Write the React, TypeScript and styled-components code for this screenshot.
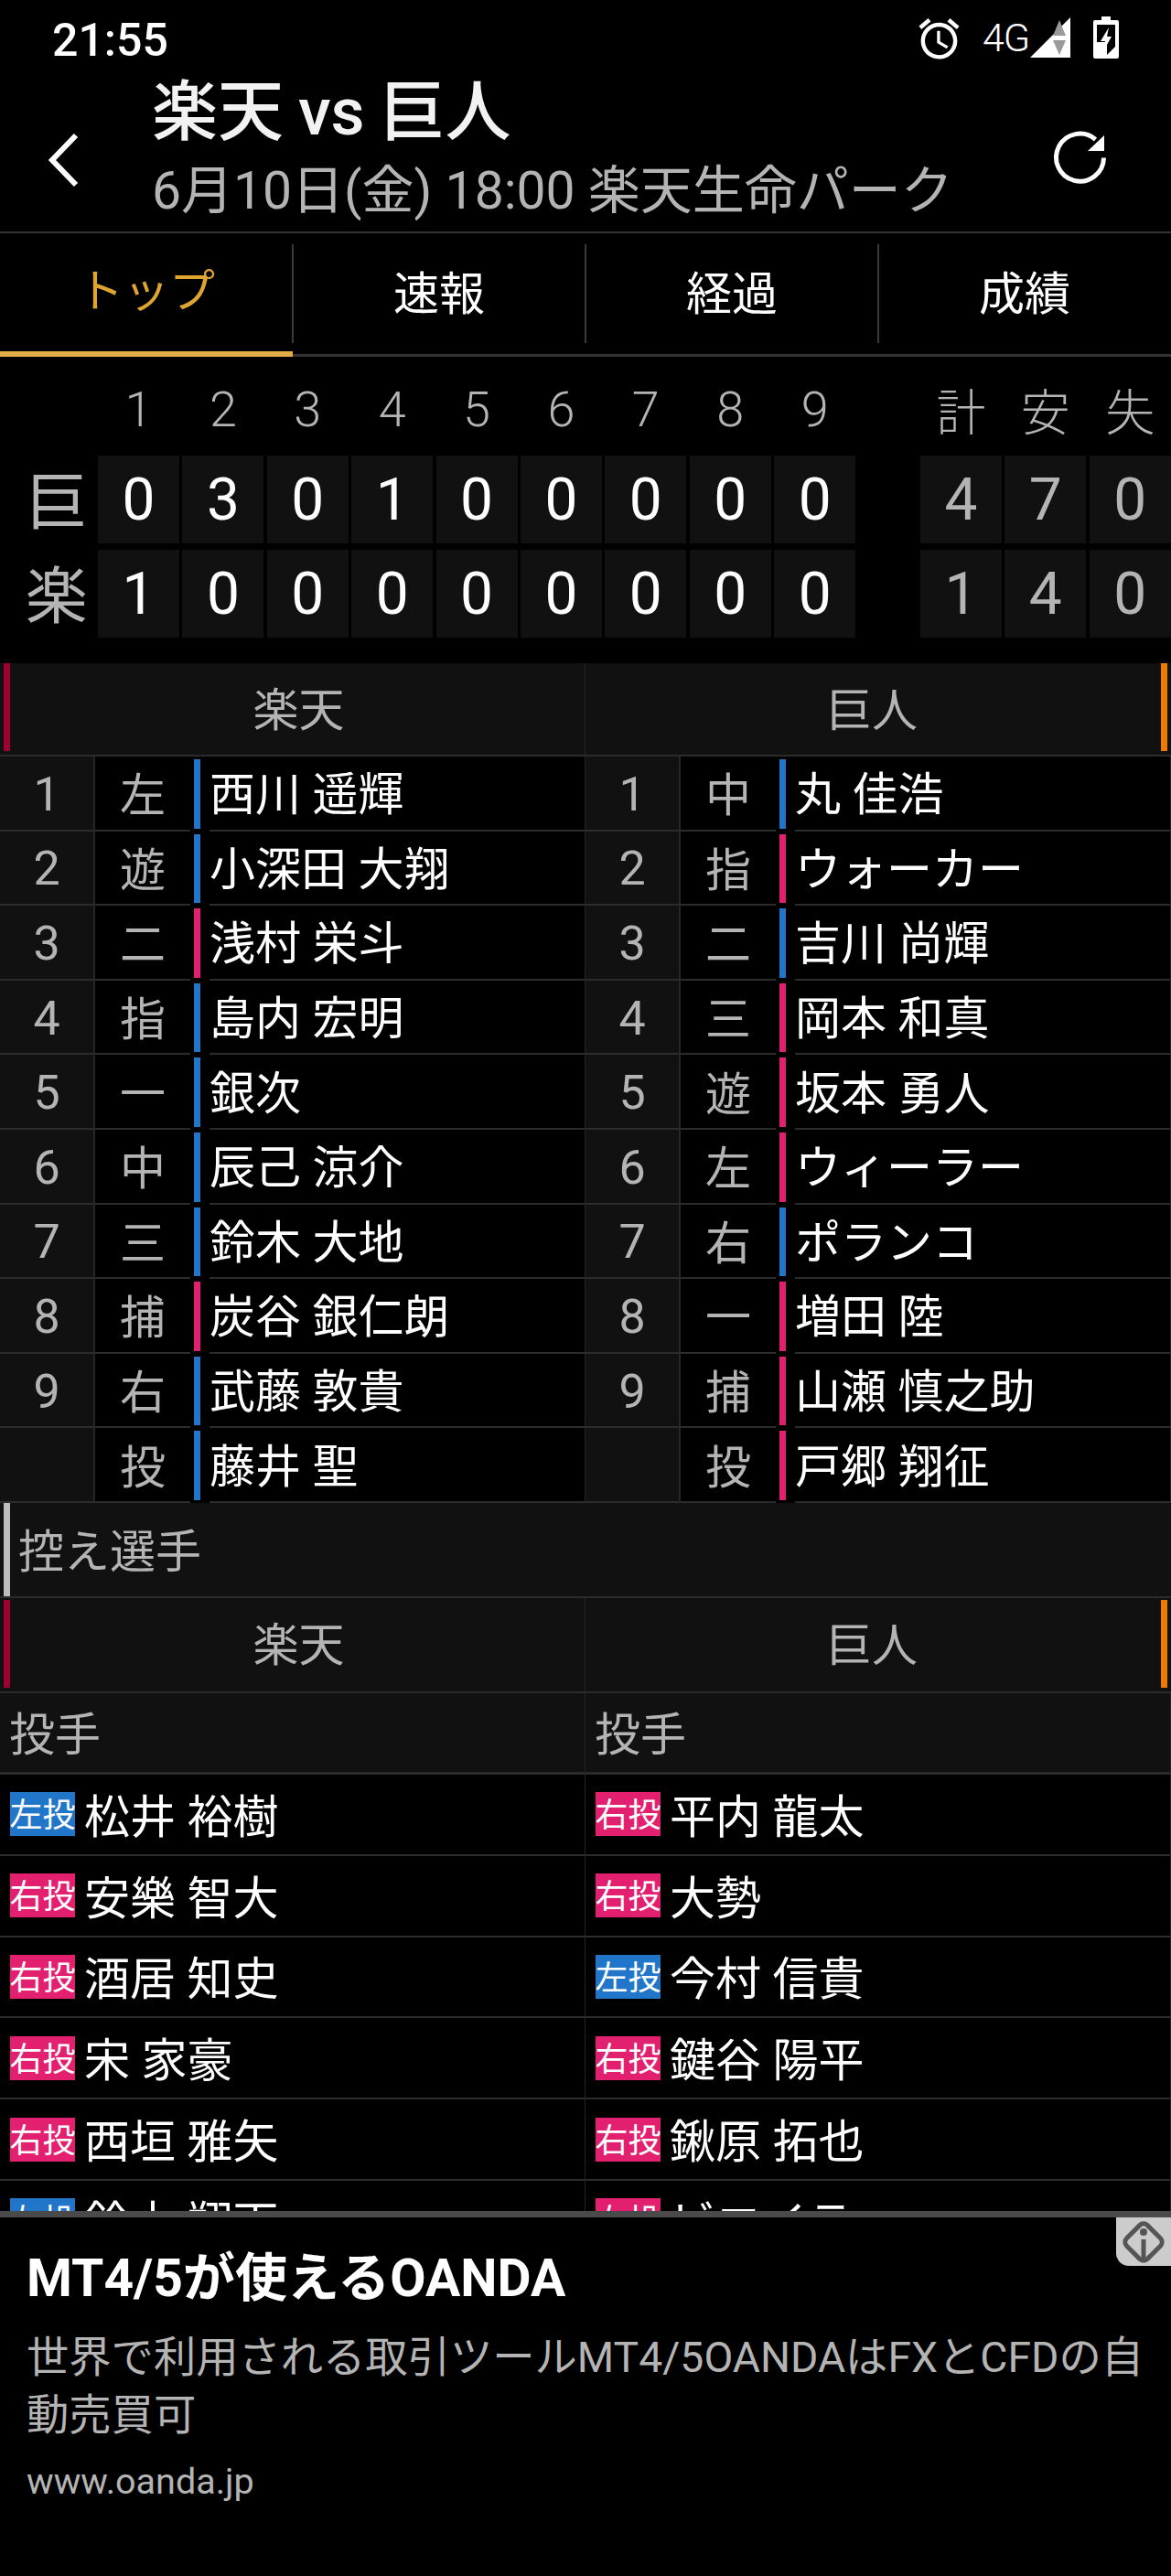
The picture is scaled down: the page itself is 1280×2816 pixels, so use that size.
import React from 'react';
import styled, { createGlobalStyle } from 'styled-components';

const GlobalStyle = createGlobalStyle`
    html, body {
        margin: 0;
        padding: 0;
        background: #000;
    }
    * {
        box-sizing: border-box;
    }
`;

const BLUE = '#2176c9';
const PINK = '#e3206f';
const LINE = '#2c2c2c';
const PANEL = '#111';
const MUTED = '#b4b4b4';

const Page = styled.div`
    width: 1280px;
    height: 2816px;
    display: flex;
    flex-direction: column;
    overflow: hidden;
    background: #000;
    color: #fff;
    font-family: Roboto, 'Noto Sans CJK JP', sans-serif;
`;

const StatusBar = styled.div`
    height: 70px;
    flex: none;
    display: flex;
    align-items: center;
    padding: 14px 57px 0 57px;
`;

const Clock = styled.div`
    font-size: 50px;
    font-weight: 500;
    line-height: 56px;
    flex: 1;
    padding-top: 4px;
`;

const AlarmIcon = styled.svg`
    width: 53px;
    height: 53px;
    margin-right: 21px;
    margin-top: 1px;
`;

const Network = styled.div`
    font-size: 43px;
    font-weight: 300;
    line-height: 1;
    margin-right: 8px;
    width: 44px;
    letter-spacing: -1px;
    margin-top: -2px;
`;

const SignalIcon = styled.svg`
    width: 44px;
    height: 44px;
    margin-right: 25px;
    margin-top: -2px;
`;

const BatteryIcon = styled.svg`
    width: 28px;
    height: 46px;
    margin-top: -3px;
`;

const Header = styled.header`
    height: 185px;
    flex: none;
    display: flex;
    align-items: center;
    border-bottom: 2px solid #333;
    padding: 0 57px 0 52px;
`;

const BackIcon = styled.svg`
    width: 34px;
    height: 60px;
    flex: none;
    margin-right: 80px;
    margin-top: 26px;
`;

const Titles = styled.div`
    flex: 1;
    margin-top: 6px;
`;

const Title = styled.div`
    font-size: 72px;
    font-weight: 500;
    line-height: 88px;
    word-spacing: -2px;
    color: #f2f2f2;
`;

const Subtitle = styled.div`
    font-size: 57px;
    line-height: 84px;
    color: ${MUTED};
    white-space: nowrap;
`;

const RefreshIcon = styled.svg`
    width: 85px;
    height: 85px;
    flex: none;
    margin-top: 22px;
`;

const Tabs = styled.nav`
    height: 135px;
    flex: none;
    display: grid;
    grid-template-columns: repeat(4, 320px);
    border-bottom: 3px solid #333;
`;

const Tab = styled.div<{ $active?: boolean; $last?: boolean }>`
    position: relative;
    display: flex;
    align-items: center;
    justify-content: center;
    height: 135px;
    padding-bottom: 12px;
    font-size: 50px;
    color: ${(p) => (p.$active ? '#dfa52e' : '#fff')};
    border-bottom: ${(p) => (p.$active ? '6px solid #e2ad45' : 'none')};

    &::after {
        content: '';
        display: ${(p) => (p.$last ? 'none' : 'block')};
        position: absolute;
        top: 12px;
        right: -1px;
        width: 2px;
        height: 108px;
        background: #3a3a3a;
    }
`;

const Main = styled.main`
    flex: 1;
    min-height: 0;
    overflow: hidden;
`;

const ScoreBoard = styled.section`
    display: grid;
    grid-template-columns: 103.6px repeat(9, 89px) 64px repeat(3, 89px);
    column-gap: 3.4px;
    row-gap: 7px;
    grid-template-rows: 89px 96px 96px;
    padding: 12px 0 28px;
`;

const InningLabel = styled.div`
    display: flex;
    align-items: center;
    justify-content: center;
    font-size: 54px;
    font-weight: 300;
    color: ${MUTED};
    padding-top: 2px;
`;

const TeamMark = styled.div`
    display: flex;
    align-items: center;
    justify-content: center;
    font-size: 68px;
    color: ${MUTED};
    padding: 0 0 6px 20px;
`;

const ScoreCell = styled.div<{ $total?: boolean }>`
    display: flex;
    align-items: center;
    justify-content: center;
    background: ${PANEL};
    font-size: 64px;
    color: ${(p) => (p.$total ? MUTED : '#fff')};
`;

const Spacer = styled.div``;

const TeamHeaderRow = styled.div<{ $tall?: boolean }>`
    display: grid;
    grid-template-columns: 640px 640px;
    height: ${(p) => (p.$tall ? 104 : 102)}px;
    background: ${PANEL};
    border-bottom: 2px solid ${LINE};
`;

const TeamHeaderCell = styled.div<{ $side: 'left' | 'right'; $tone: string; $inset: number }>`
    position: relative;
    display: flex;
    align-items: center;
    justify-content: center;
    font-size: 50px;
    color: ${MUTED};
    padding: ${(p) => (p.$side === 'left' ? '0 0 7px 14px' : '0 14px 7px 0')};
    border-right: ${(p) => (p.$side === 'left' ? '1px solid #242424' : 'none')};

    &::before {
        content: '';
        position: absolute;
        top: ${(p) => p.$inset}px;
        bottom: 4px;
        width: 7px;
        background: ${(p) => p.$tone};
        ${(p) => (p.$side === 'left' ? 'left: 4px;' : 'right: 4px;')}
    }
`;

const TwoColumns = styled.div`
    display: grid;
    grid-template-columns: 640px 640px;
`;

const LineupEntry = styled.div`
    display: grid;
    grid-template-columns: 104px 104px 21px 1fr;
    height: 81.6px;
`;

const OrderCell = styled.div`
    display: flex;
    align-items: center;
    justify-content: center;
    background: ${PANEL};
    border-right: 2px solid #262626;
    border-bottom: 2px solid ${LINE};
    font-size: 52px;
    color: ${MUTED};
    padding-top: 3px;
`;

const PositionCell = styled.div`
    display: flex;
    align-items: center;
    justify-content: center;
    border-bottom: 2px solid ${LINE};
    font-size: 50px;
    color: ${MUTED};
    padding-bottom: 3px;
`;

const MarkerCell = styled.div`
    padding: 3px 3.6px 1px;
    border-bottom: 2px solid #000;
`;

const Marker = styled.div<{ $tone: string }>`
    width: 7px;
    height: 100%;
    background: ${(p) => p.$tone};
`;

const PlayerCell = styled.div`
    display: flex;
    align-items: center;
    padding-bottom: 5px;
    border-bottom: 2px solid ${LINE};
    border-right: 1px solid #242424;
    font-size: 50px;
    white-space: nowrap;
`;

const ReserveHeading = styled.div`
    height: 104px;
    display: flex;
    align-items: center;
    background: ${PANEL};
    border-bottom: 2px solid ${LINE};
    font-size: 50px;
    color: ${MUTED};
    padding: 0 0 3px 20px;
    position: relative;

    &::before {
        content: '';
        position: absolute;
        left: 4px;
        top: 0;
        bottom: 0;
        width: 7px;
        background: #bdbdbd;
    }
`;

const RoleCell = styled.div`
    height: 89px;
    display: flex;
    align-items: center;
    padding: 0 0 3px 10px;
    background: ${PANEL};
    border-bottom: 3px solid ${LINE};
    border-right: 1px solid #242424;
    font-size: 50px;
    color: ${MUTED};
`;

const BenchEntry = styled.div`
    height: 88.8px;
    display: flex;
    align-items: center;
    padding-left: 11px;
    border-bottom: 2px solid ${LINE};
    border-right: 1px solid #242424;
    font-size: 50px;
    white-space: nowrap;
`;

const BenchName = styled.span`
    padding-bottom: 3px;
`;

const Badge = styled.span<{ $tone: string }>`
    width: 71px;
    height: 48px;
    flex: none;
    display: flex;
    align-items: flex-end;
    justify-content: center;
    margin-right: 10px;
    background: ${(p) => p.$tone};
    font-size: 36px;
    line-height: 44px;
    color: #fff;
`;

const AdPanel = styled.aside`
    position: relative;
    height: 399px;
    flex: none;
    background: #000;
    border-top: 7px solid #4a4a4a;
    padding: 32px 29px 0;
`;

const AdInfo = styled.div`
    position: absolute;
    top: 0;
    right: 0;
    width: 60px;
    height: 53px;
    background: #ccc;
    border-bottom-left-radius: 14px;
    display: flex;
    align-items: center;
    justify-content: center;
`;

const AdTitle = styled.div`
    font-size: 57px;
    font-weight: 700;
    line-height: 70px;
`;

const AdBody = styled.div`
    margin-top: 20px;
    font-size: 46.3px;
    line-height: 63px;
    color: ${MUTED};
    width: 1225px;
`;

const AdUrl = styled.div`
    margin-top: 16px;
    font-size: 39.5px;
    line-height: 50px;
    color: ${MUTED};
`;

const innings = ['1', '2', '3', '4', '5', '6', '7', '8', '9'];
const totalsHead = ['計', '安', '失'];
const scores = [
    { team: '巨', runs: [0, 3, 0, 1, 0, 0, 0, 0, 0], totals: [4, 7, 0] },
    { team: '楽', runs: [1, 0, 0, 0, 0, 0, 0, 0, 0], totals: [1, 4, 0] },
];

type Starter = [string, string, string];

const lineups: Starter[][] = [
    [
        ['1', '左', '西川 遥輝'],
        ['2', '遊', '小深田 大翔'],
        ['3', '二', '浅村 栄斗'],
        ['4', '指', '島内 宏明'],
        ['5', '一', '銀次'],
        ['6', '中', '辰己 涼介'],
        ['7', '三', '鈴木 大地'],
        ['8', '捕', '炭谷 銀仁朗'],
        ['9', '右', '武藤 敦貴'],
        ['', '投', '藤井 聖'],
    ],
    [
        ['1', '中', '丸 佳浩'],
        ['2', '指', 'ウォーカー'],
        ['3', '二', '吉川 尚輝'],
        ['4', '三', '岡本 和真'],
        ['5', '遊', '坂本 勇人'],
        ['6', '左', 'ウィーラー'],
        ['7', '右', 'ポランコ'],
        ['8', '一', '増田 陸'],
        ['9', '捕', '山瀬 慎之助'],
        ['', '投', '戸郷 翔征'],
    ],
];

const starterTones = [
    [BLUE, BLUE, PINK, BLUE, BLUE, BLUE, BLUE, PINK, BLUE, BLUE],
    [BLUE, PINK, BLUE, PINK, PINK, PINK, BLUE, PINK, PINK, PINK],
];

const benchPitchers: [string, string][][] = [
    [
        ['左投', '松井 裕樹'],
        ['右投', '安樂 智大'],
        ['右投', '酒居 知史'],
        ['右投', '宋 家豪'],
        ['右投', '西垣 雅矢'],
        ['左投', '鈴木 翔天'],
    ],
    [
        ['右投', '平内 龍太'],
        ['右投', '大勢'],
        ['左投', '今村 信貴'],
        ['右投', '鍵谷 陽平'],
        ['右投', '鍬原 拓也'],
        ['右投', 'ビエイラ'],
    ],
];

const TeamHeaders = ({ tall }: { tall?: boolean }) => (
    <TeamHeaderRow $tall={tall}>
        <TeamHeaderCell $side="left" $tone="#9e0031" $inset={tall ? 2 : 0}>
            楽天
        </TeamHeaderCell>
        <TeamHeaderCell $side="right" $tone="#ee7a00" $inset={tall ? 2 : 0}>
            巨人
        </TeamHeaderCell>
    </TeamHeaderRow>
);

const App = () => (
    <Page>
        <GlobalStyle />
        <StatusBar>
            <Clock>21:55</Clock>
            <AlarmIcon viewBox="0 0 24 24" fill="#fff">
                <path d="M22 5.72l-4.6-3.86-1.29 1.53 4.6 3.86L22 5.72zM7.88 3.39L6.6 1.86 2 5.71l1.29 1.53 4.59-3.85zM12.5 8H11v6l4.75 2.85.75-1.23-4-2.37V8zM12 4c-4.97 0-9 4.03-9 9s4.02 9 9 9c4.97 0 9-4.03 9-9s-4.03-9-9-9zm0 16c-3.87 0-7-3.13-7-7s3.13-7 7-7 7 3.13 7 7-3.13 7-7 7z" />
            </AlarmIcon>
            <Network>4G</Network>
            <SignalIcon viewBox="0 0 44 44">
                <path d="M44 0V44H0Z" fill="#fff" />
                <path d="M32 3L39 20H25Z" fill="#9a9a9a" />
                <path d="M25 25H39L32 41Z" fill="#9a9a9a" />
            </SignalIcon>
            <BatteryIcon viewBox="0 0 28 46">
                <path d="M9 0H19V4H26Q28 4 28 6V44Q28 46 26 46H2Q0 46 0 44V6Q0 4 2 4H9Z" fill="#fff" />
                <path d="M4 9H24V33L15 42V28H4Z" fill="#000" />
                <path d="M17 12L8 27H13L11 38L20 22H15Z" fill="#fff" />
            </BatteryIcon>
        </StatusBar>
        <Header>
            <BackIcon viewBox="0 0 34 60" fill="none">
                <path d="M31 3L5 30L31 57" stroke="#fff" strokeWidth="6" />
            </BackIcon>
            <Titles>
                <Title>楽天 vs 巨人</Title>
                <Subtitle>6月10日(金) 18:00 楽天生命パーク</Subtitle>
            </Titles>
            <RefreshIcon viewBox="0 0 85 85">
                <path d="M68.5 42.5A26 26 0 1 1 59.5 22.5" fill="none" stroke="#fff" strokeWidth="5" />
                <path d="M69 18V35H51Z" fill="#fff" />
            </RefreshIcon>
        </Header>
        <Tabs>
            <Tab $active>トップ</Tab>
            <Tab>速報</Tab>
            <Tab>経過</Tab>
            <Tab $last>成績</Tab>
        </Tabs>
        <Main>
            <ScoreBoard>
                <Spacer />
                {innings.map((inning) => (
                    <InningLabel key={inning}>{inning}</InningLabel>
                ))}
                <Spacer />
                {totalsHead.map((label) => (
                    <InningLabel key={label}>{label}</InningLabel>
                ))}
                {scores.map((line) => (
                    <React.Fragment key={line.team}>
                        <TeamMark>{line.team}</TeamMark>
                        {line.runs.map((run, i) => (
                            <ScoreCell key={i}>{run}</ScoreCell>
                        ))}
                        <Spacer />
                        {line.totals.map((total, i) => (
                            <ScoreCell key={i} $total>
                                {total}
                            </ScoreCell>
                        ))}
                    </React.Fragment>
                ))}
            </ScoreBoard>
            <TeamHeaders />
            <TwoColumns>
                {lineups.map((lineup, side) => (
                    <div key={side}>
                        {lineup.map(([order, position, name], i) => (
                            <LineupEntry key={name}>
                                <OrderCell>{order}</OrderCell>
                                <PositionCell>{position}</PositionCell>
                                <MarkerCell>
                                    <Marker $tone={starterTones[side][i]} />
                                </MarkerCell>
                                <PlayerCell>{name}</PlayerCell>
                            </LineupEntry>
                        ))}
                    </div>
                ))}
            </TwoColumns>
            <ReserveHeading>控え選手</ReserveHeading>
            <TeamHeaders tall />
            <TwoColumns>
                {benchPitchers.map((pitchers, side) => (
                    <div key={side}>
                        <RoleCell>投手</RoleCell>
                        {pitchers.map(([hand, name]) => (
                            <BenchEntry key={name}>
                                <Badge $tone={hand === '左投' ? BLUE : PINK}>{hand}</Badge>
                                <BenchName>{name}</BenchName>
                            </BenchEntry>
                        ))}
                    </div>
                ))}
            </TwoColumns>
        </Main>
        <AdPanel>
            <AdInfo>
                <svg width="50" height="50" viewBox="0 0 50 50" fill="none">
                    <rect x="9" y="9" width="32" height="32" rx="6" transform="rotate(45 25 25)" stroke="#555" strokeWidth="5" />
                    <circle cx="25" cy="14" r="4" fill="#555" />
                    <path d="M25 22V46" stroke="#555" strokeWidth="5" />
                </svg>
            </AdInfo>
            <AdTitle>MT4/5が使えるOANDA</AdTitle>
            <AdBody>世界で利用される取引ツールMT4/5OANDAはFXとCFDの自動売買可</AdBody>
            <AdUrl>www.oanda.jp</AdUrl>
        </AdPanel>
    </Page>
);

export default App;
